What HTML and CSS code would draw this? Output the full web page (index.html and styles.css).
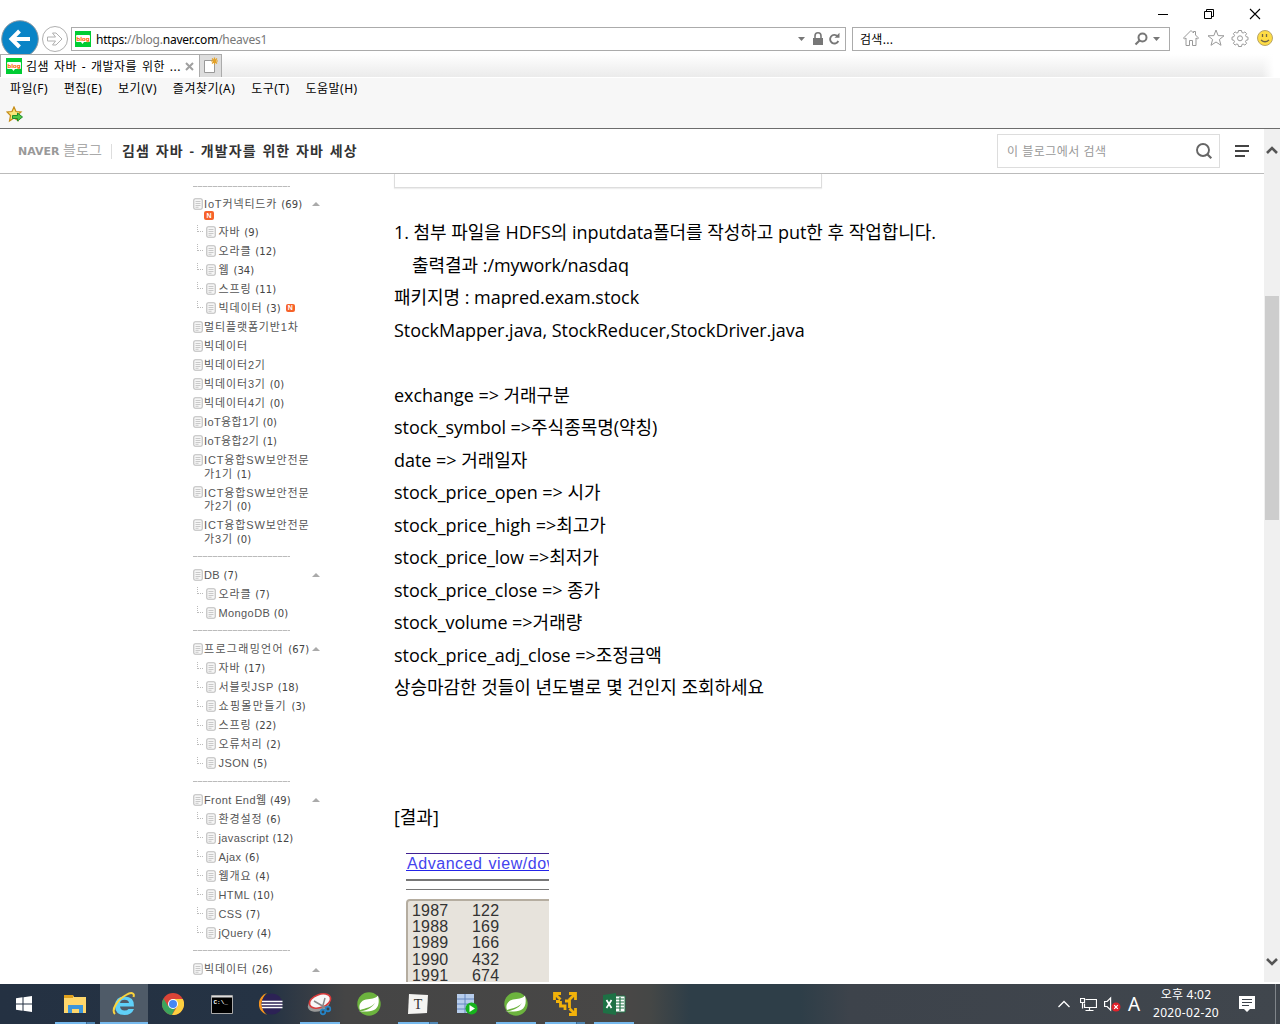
FILE: index.html
```html
<!DOCTYPE html>
<html lang="ko">
<head>
<meta charset="utf-8">
<title>김샘 자바 - 개발자를 위한 자바 세상</title>
<link rel="stylesheet" href="styles.css">
</head>
<body>
<svg class="defs" width="0" height="0" aria-hidden="true">
  <defs>
    <symbol id="doc" viewBox="0 0 10 12"><rect x=".75" y=".75" width="8.5" height="10.5" rx="1.5" fill="#f6f6f6" stroke="#bcbcbc" stroke-width="1.1"/><path d="M2.5 3.5h5M2.5 5.5h5M2.5 7.500h5M2.500 9.300h3" stroke="#c4c4c4" stroke-width=".9"/></symbol>
    <symbol id="spring" viewBox="0 0 24 24"><circle cx="12" cy="12" r="11.700" fill="#6cb33e"/><path d="M21 3.500c1.500 6 1 12-4 14.500-4 2-9 1.500-16 1.500 8-.5 14-3.500 17-8.500-4 4.500-9 5-15 7-2-5 1-9.500 6-10.500 5-1 9-.5 12-4z" fill="#fff"/></symbol>
    <symbol id="blog" viewBox="0 0 16 16"><path fill="#0c3" d="M0 0h16v16H0z"/><path fill="#fff" d="M2 4h12q1 0 1 1v5q0 1-1 1H9l-1.500 2L6 11H2q-1 0-1-1V5q0-1 1-1z"/><text x="8" y="9.500" text-anchor="middle" class="blog-word">blog</text></symbol>
  </defs>
</svg>

<header class="browser">
  <div class="titlebar">
    <svg width="12" height="12" viewBox="0 0 12 12"><path d="M1 6.500h10" stroke="#000"/></svg>
    <svg width="12" height="12" viewBox="0 0 12 12"><path d="M1.500 3.500h7v7h-7zM3.500 3.500v-2h7v7h-2" fill="none" stroke="#000"/></svg>
    <svg width="12" height="12" viewBox="0 0 12 12"><path d="M1 1l10 10M11 1L1 11" stroke="#000" stroke-width="1.100"/></svg>
  </div>
  <div class="navrow">
    <svg class="back" width="40" height="35" viewBox="0 0 40 35"><circle cx="20" cy="20" r="18.300" fill="#0a84c6" stroke="#8d9aa3"/><path d="M30 20H12M19.500 12l-8 8 8 8" fill="none" stroke="#fff" stroke-width="4"/></svg>
    <svg class="forward" width="28" height="28" viewBox="0 0 28 28"><circle cx="14" cy="14" r="12.500" fill="#fff" stroke="#b0b0b0"/><path d="M6.500 12h8l-3-4h3.500l6 6-6 6h-3.500l3-4h-8z" fill="none" stroke="#b0b0b0"/></svg>
    <div class="address">
      <svg width="16" height="16"><use href="#blog"/></svg>
      <span class="url">https:<i>//blog.</i>naver.com<i>/heaves1</i></span>
      <svg class="addr-tools" width="44" height="16" viewBox="0 0 44 16"><path d="M1 6h7L4.500 10z" fill="#777"/><path d="M16 7h10v7h-10z" fill="#777"/><path d="M18 7V5a3 3.200 0 0 1 6 0v2" fill="none" stroke="#777" stroke-width="1.600"/><path d="M40.500 5.200A4.300 4.300 0 1 0 41.300 10" fill="none" stroke="#777" stroke-width="1.900"/><path d="M37.500 6.800h5V1.800z" fill="#777"/></svg>
    </div>
    <div class="websearch">
      <span>검색...</span>
      <svg width="28" height="16" viewBox="0 0 28 16"><circle cx="8.500" cy="6.500" r="4" fill="none" stroke="#777" stroke-width="2"/><path d="M5.500 9.500L1.500 13.500" stroke="#777" stroke-width="2.200"/><path d="M19 6h7l-3.500 4z" fill="#777"/></svg>
    </div>
    <div class="tools">
      <svg width="18" height="18" viewBox="0 0 18 18"><path d="M1.500 9L9 1.500 11.500 4V2.500h2V6l3 3-1 1-1.500-1v7.500h-3.500v-5h-3v5H4V9l-1.500 1z" fill="#fff" stroke="#999"/></svg>
      <svg width="18" height="18" viewBox="0 0 18 18"><path d="M9 1l2.100 5.600 5.900.2-4.600 3.700 1.600 5.800L9 13l-5 3.300 1.600-5.800L1 6.800l5.900-.2z" fill="#fff" stroke="#999"/></svg>
      <svg width="18" height="18" viewBox="0 0 18 18"><path d="M7.500 1.500h3l.4 2 1.300.5 1.700-1.100 1.700 1.700-1.100 1.800.6 1.300 1.900.5v2.600l-1.900.5-.6 1.300 1.100 1.700-1.700 1.800-1.800-1.100-1.200.5-.4 2h-3l-.4-2-1.300-.5-1.700 1.100-1.700-1.800 1.100-1.700-.6-1.300-1.900-.5V8.200l1.900-.5.6-1.300-1.100-1.800L4.100 2.900 5.800 4l1.300-.5z" fill="#fff" stroke="#999"/><circle cx="9" cy="9.300" r="2.500" fill="#fff" stroke="#999"/></svg>
      <svg width="18" height="18" viewBox="0 0 18 18"><circle cx="9" cy="9" r="7.500" fill="#fedc45" stroke="#b8a56a"/><path d="M6.500 5v3M10.500 5v3M5 11q4 3.500 8 0" fill="none" stroke="#716546" stroke-width="1.300"/></svg>
    </div>
  </div>
  <div class="tabrow">
    <div class="tab"><svg width="16" height="16"><use href="#blog"/></svg><span>김샘 자바 - 개발자를 위한 ...</span><svg width="9" height="9" viewBox="0 0 9 9"><path d="M1 1l7 7M8 1L1 8" stroke="#a0a0a0" stroke-width="2"/></svg></div>
    <div class="newtab"><svg width="16" height="17" viewBox="0 0 16 17"><path d="M.5 3.500h10v12H.5z" fill="#fff" stroke="#999"/><path d="M10.500.5v7M7 4h7M8 1.500l5 5M13 1.500l-5 5" stroke="#e3a127" stroke-width="1.200"/></svg></div>
  </div>
  <nav class="menus"><span>파일(F)</span><span>편집(E)</span><span>보기(V)</span><span>즐겨찾기(A)</span><span>도구(T)</span><span>도움말(H)</span></nav>
  <div class="favorites"><svg width="17" height="17" viewBox="0 0 17 17"><path d="M8 1l2 4.500 5 .5-4 3.500 1 5L8 12l-4.500 3 1-5.500L1 6l5-.5z" fill="#fbe57b" stroke="#c58b16" stroke-width="1.200"/><path d="M6.500 9.500h5V7l5 4-5 4v-2.500h-5z" fill="#51c544" stroke="#1f8e2c"/></svg></div>
</header>

<div class="viewport">
  <div class="page">
    <header class="bloghead">
      <span class="logo"><b>NAVER</b> 블로그</span>
      <h1>김샘 자바 - 개발자를 위한 자바 세상</h1>
      <div class="blogsearch"><span>이 블로그에서 검색</span><svg width="18" height="18" viewBox="0 0 18 18"><circle cx="8" cy="8" r="6" fill="none" stroke="#666" stroke-width="1.900"/><path d="M12.300 12.300l4 4" stroke="#666" stroke-width="2.200"/></svg></div>
      <svg class="burger" width="14" height="12" viewBox="0 0 14 12"><path d="M0 1h14M0 6h14M0 11h10" stroke="#444" stroke-width="2"/></svg>
    </header>
    <div class="columns">
      <aside class="side">
        <hr>
        <ul>
          <li class="top has-new"><svg><use href="#doc"/></svg><span>IoT커넥티드카 <em>(69)</em><br><b class="new">N</b></span><i class="fold"></i></li>
          <li class="sub"><svg><use href="#doc"/></svg><span>자바 <em>(9)</em></span></li>
          <li class="sub"><svg><use href="#doc"/></svg><span>오라클 <em>(12)</em></span></li>
          <li class="sub"><svg><use href="#doc"/></svg><span>웹 <em>(34)</em></span></li>
          <li class="sub"><svg><use href="#doc"/></svg><span>스프링 <em>(11)</em></span></li>
          <li class="sub"><svg><use href="#doc"/></svg><span>빅데이터 <em>(3)</em></span><b class="new small">N</b></li>
          <li><svg><use href="#doc"/></svg><span>멀티플랫폼기반1차</span></li>
          <li><svg><use href="#doc"/></svg><span>빅데이터</span></li>
          <li><svg><use href="#doc"/></svg><span>빅데이터2기</span></li>
          <li><svg><use href="#doc"/></svg><span>빅데이터3기 <em>(0)</em></span></li>
          <li><svg><use href="#doc"/></svg><span>빅데이터4기 <em>(0)</em></span></li>
          <li class="latin"><svg><use href="#doc"/></svg><span>IoT융합1기 <em>(0)</em></span></li>
          <li class="latin"><svg><use href="#doc"/></svg><span>IoT융합2기 <em>(1)</em></span></li>
          <li class="two"><svg><use href="#doc"/></svg><span>ICT융합SW보안전문<br>가1기 <em>(1)</em></span></li>
          <li class="two"><svg><use href="#doc"/></svg><span>ICT융합SW보안전문<br>가2기 <em>(0)</em></span></li>
          <li class="two"><svg><use href="#doc"/></svg><span>ICT융합SW보안전문<br>가3기 <em>(0)</em></span></li>
        </ul>
        <hr>
        <ul>
          <li class="top latin"><svg><use href="#doc"/></svg><span>DB <em>(7)</em></span><i class="fold"></i></li>
          <li class="sub"><svg><use href="#doc"/></svg><span>오라클 <em>(7)</em></span></li>
          <li class="sub latin"><svg><use href="#doc"/></svg><span>MongoDB <em>(0)</em></span></li>
        </ul>
        <hr>
        <ul>
          <li class="top wide"><svg><use href="#doc"/></svg><span>프로그래밍언어 <em>(67)</em></span><i class="fold"></i></li>
          <li class="sub"><svg><use href="#doc"/></svg><span>자바 <em>(17)</em></span></li>
          <li class="sub"><svg><use href="#doc"/></svg><span>서블릿JSP <em>(18)</em></span></li>
          <li class="sub wide"><svg><use href="#doc"/></svg><span>쇼핑몰만들기 <em>(3)</em></span></li>
          <li class="sub"><svg><use href="#doc"/></svg><span>스프링 <em>(22)</em></span></li>
          <li class="sub"><svg><use href="#doc"/></svg><span>오류처리 <em>(2)</em></span></li>
          <li class="sub latin"><svg><use href="#doc"/></svg><span>JSON <em>(5)</em></span></li>
        </ul>
        <hr>
        <ul>
          <li class="top latin"><svg><use href="#doc"/></svg><span>Front End웹 <em>(49)</em></span><i class="fold"></i></li>
          <li class="sub"><svg><use href="#doc"/></svg><span>환경설정 <em>(6)</em></span></li>
          <li class="sub latin"><svg><use href="#doc"/></svg><span>javascript <em>(12)</em></span></li>
          <li class="sub latin"><svg><use href="#doc"/></svg><span>Ajax <em>(6)</em></span></li>
          <li class="sub"><svg><use href="#doc"/></svg><span>웹개요 <em>(4)</em></span></li>
          <li class="sub latin"><svg><use href="#doc"/></svg><span>HTML <em>(10)</em></span></li>
          <li class="sub latin"><svg><use href="#doc"/></svg><span>CSS <em>(7)</em></span></li>
          <li class="sub latin"><svg><use href="#doc"/></svg><span>jQuery <em>(4)</em></span></li>
        </ul>
        <hr>
        <ul>
          <li class="top"><svg><use href="#doc"/></svg><span>빅데이터 <em>(26)</em></span><i class="fold"></i></li>
        </ul>
      </aside>
      <main class="post">
        <div class="card"></div>
        <div class="text">
          <p>1. 첨부 파일을 HDFS의 inputdata폴더를 작성하고 put한 후 작업합니다.</p>
          <p class="indent">출력결과 :/mywork/nasdaq</p>
          <p>패키지명 : mapred.exam.stock</p>
          <p>StockMapper.java, StockReducer,StockDriver.java</p>
          <p></p>
          <p>exchange =&gt; 거래구분</p>
          <p>stock_symbol =&gt;주식종목명(약칭)</p>
          <p>date =&gt; 거래일자</p>
          <p>stock_price_open =&gt; 시가</p>
          <p>stock_price_high =&gt;최고가</p>
          <p>stock_price_low =&gt;최저가</p>
          <p>stock_price_close =&gt; 종가</p>
          <p>stock_volume =&gt;거래량</p>
          <p>stock_price_adj_close =&gt;조정금액</p>
          <p>상승마감한 것들이 년도별로 몇 건인지 조회하세요</p>
          <p></p><p></p><p></p>
          <p>[결과]</p>
        </div>
        <figure class="result">
          <div class="adv">Advanced view/dow</div>
          <div class="rules"></div>
          <div class="output">
            <div><span>1987</span><span>122</span></div>
            <div><span>1988</span><span>169</span></div>
            <div><span>1989</span><span>166</span></div>
            <div><span>1990</span><span>432</span></div>
            <div><span>1991</span><span>674</span></div>
          </div>
        </figure>
      </main>
    </div>
  </div>
  <div class="scroll">
    <svg width="12" height="8" viewBox="0 0 12 8"><path d="M1 7l5-5 5 5" fill="none" stroke="#555" stroke-width="2.600"/></svg>
    <div class="thumb"></div>
    <svg width="12" height="8" viewBox="0 0 12 8"><path d="M1 1l5 5 5-5" fill="none" stroke="#555" stroke-width="2.600"/></svg>
  </div>
</div>

<footer class="taskbar">
  <div class="start"><svg width="16" height="16" viewBox="0 0 16 16"><path d="M0 2.200l6.500-.9v6.200H0zM7.500 1.200L16 0v7.500H7.500zM0 8.500h6.500v6.200L0 13.800zM7.500 8.500H16V16l-8.500-1.200z" fill="#fff"/></svg></div>
  <div class="apps">
    <div class="app run multi"><svg width="24" height="24" viewBox="0 0 24 24"><path d="M1 3h9l1 2h12v16H1z" fill="#ffd76b"/><path d="M1 3h9v3H1z" fill="#e0a01c"/><path d="M5 13h15v8h-4v-4H9v4H5z" fill="#3c96dc"/></svg></div>
    <div class="app run active"><svg width="24" height="24" viewBox="0 0 24 24"><path d="M19.500 14.500H8q.5 4 4.500 4 3 0 4-1.500h5.500q-2.500 6-9.500 6-9.500 0-9.500-9.500Q3.500 4.500 12.500 4.500q10 0 9.500 10zM8 11h9q-.5-3.200-4.500-3.200T8 11z" fill="#5fd0f8"/><path d="M3 22C-1 18 5 8 14 3c5-3 9-2.500 7.500 2" fill="none" stroke="#fbd33c" stroke-width="2"/></svg></div>
    <div class="app"><svg width="22" height="22" viewBox="0 0 22 22"><circle cx="11" cy="11" r="11" fill="#db4437"/><path d="M1.500 5.500A11 11 0 0 0 10 22l4-8-8-1z" fill="#3ba55c"/><path d="M11 6h9.800A11 11 0 0 1 10 22l5.500-9z" fill="#fccf3f"/><circle cx="11" cy="11" r="5" fill="#fff"/><circle cx="11" cy="11" r="4" fill="#4587f3"/></svg></div>
    <div class="app"><svg width="22" height="19" viewBox="0 0 22 19"><path d="M.5.500h21v18H.5z" fill="#000" stroke="#aaa"/><path d="M1 1h20v1.500H1z" fill="#ddd"/><text x="2.500" y="8.500" class="cmd-word">C:\_</text></svg></div>
    <div class="app"><svg width="24" height="22" viewBox="0 0 24 22"><path d="M8 0a11.500 11.500 0 0 0 0 22A14 14 0 0 1 8 0z" fill="#f7941e"/><circle cx="13" cy="11" r="10.500" fill="#2c2255"/><path d="M3 8.500h20.500M2.500 11.500h21M3 14.500h20.500" stroke="#fff" stroke-width="1.500"/></svg></div>
    <div class="app run"><svg width="26" height="24" viewBox="0 0 26 24"><ellipse cx="11.500" cy="12" rx="11.500" ry="7" fill="#999" transform="rotate(-20 12 11)"/><ellipse cx="13" cy="9" rx="11" ry="6.500" fill="#f7f7f7" stroke="#d83b3b" stroke-width="1.600" transform="rotate(-20 13 9)"/><path d="M7 9l12 7M18 6l-3 11" stroke="#888" stroke-width="1.500"/><circle cx="21" cy="17" r="2.300" fill="none" stroke="#2583c6" stroke-width="1.700"/><circle cx="16" cy="20" r="2.300" fill="none" stroke="#2583c6" stroke-width="1.700"/></svg></div>
    <div class="app"><svg width="24" height="24"><use href="#spring"/></svg></div>
    <div class="app run multi"><svg width="22" height="22" viewBox="0 0 22 22"><path d="M2 1l19 1-1 18-8 .500L1 21z" fill="#f4f4f2"/><text x="11" y="16" text-anchor="middle" class="t-word">T</text></svg></div>
    <div class="app"><svg width="22" height="22" viewBox="0 0 22 22"><path d="M1 1h17v19H1z" fill="#b7cdec"/><path d="M1 6h17M1 11h17M1 16h17M9 1v19" stroke="#6486be"/><circle cx="15.500" cy="15.500" r="6" fill="#16b31c"/><path d="M13.500 12l5.500 3.500-5.500 3.500z" fill="#fff"/></svg></div>
    <div class="app run"><svg width="24" height="24"><use href="#spring"/></svg></div>
    <div class="app run multi"><svg width="24" height="24" viewBox="0 0 24 24"><path d="M1.500 8V1.500H8M2 2l5.500 5.500M16 1.500h6.500V8M22 2l-6 6M22.500 16v6.500H16M22 22l-5.500-5.500M7 9.500H3M7.500 9v5H12v4M12 9h4.500v7" fill="none" stroke="#f2b20a" stroke-width="2.800"/></svg></div>
    <div class="app run"><svg width="23" height="22" viewBox="0 0 23 22"><path d="M11 3h11v16H11z" fill="#fff" stroke="#217346"/><path d="M13 6h8M13 9h8M13 12h8M13 15h8M17 4v14" stroke="#217346" stroke-width="1.200"/><path d="M0 2l13-2v22L0 20z" fill="#1e7145"/><path d="M3.500 7l5 8M8.500 7l-5 8" stroke="#fff" stroke-width="1.700"/></svg></div>
  </div>
  <div class="tray">
    <svg width="12" height="8" viewBox="0 0 12 8"><path d="M.5 7L6 1.500 11.500 7" fill="none" stroke="#fff" stroke-width="1.300"/></svg>
    <svg width="17" height="15" viewBox="0 0 17 15"><path d="M5.500 2.500h11v8h-12v-4M9.500 10.500v3M5.500 13.500h8M.5 1.500h4v4h-4zM2.500 5.500v6" fill="none" stroke="#fff" stroke-width="1.200"/></svg>
    <svg width="17" height="16" viewBox="0 0 17 16"><path d="M.6 5.500h2.500l3.500-3.500v12l-3.500-3.500H.6z" fill="none" stroke="#fff" stroke-width="1.200"/><circle cx="12" cy="11" r="4.500" fill="#e1222b"/><path d="M10.200 9.200l3.600 3.600M13.800 9.200l-3.600 3.600" stroke="#fff" stroke-width="1.200"/></svg>
    <span class="ime">A</span>
    <div class="clock"><span>오후 4:02</span><span class="date">2020-02-20</span></div>
    <svg width="16" height="16" viewBox="0 0 16 16"><path d="M0 0h16v13h-5l-3 3-3-3H0z" fill="#fff"/><path d="M3 3.500h10M3 6.500h10M3 9.500h7" stroke="#3d434b" stroke-width="1.100"/></svg>
    <div class="peek"></div>
  </div>
</footer>
</body>
</html>
```
FILE: styles.css
```css
* { box-sizing: border-box; }
body { margin: 0; width: 1280px; height: 1024px; overflow: hidden; display: flex; flex-direction: column; background: #fff; font: 12px "Noto Sans", "Noto Sans CJK KR", sans-serif; color: #000; }
svg { display: block; flex: none; }
span, p { white-space: nowrap; }
.defs { position: absolute; }
.blog-word { font: bold 5.5px "DejaVu Sans", sans-serif; fill: #f60; }
.cmd-word { font: bold 6px "Liberation Mono", monospace; fill: #fff; }
.t-word { font: 14px "Liberation Serif", serif; fill: #333; }

.browser { height: 129px; flex: none; background: #f7f7f7; border-bottom: 1px solid #6d6d6d; }
.titlebar { height: 20px; padding: 8px 19px 0 0; display: flex; justify-content: flex-end; gap: 34px; background: #fff; }
.navrow { height: 34px; display: flex; align-items: flex-start; background: #fff; padding-top: 7px; }
.back { margin-top: -8px; }
.forward { margin: -2px 2px 0 1px; }
.address, .websearch { height: 24px; border: 1px solid #ababab; background: #fff; display: flex; align-items: center; justify-content: space-between; }
.address { width: 775px; padding: 0 4px 0 3px; }
.url { flex: 1; margin-left: 5px; letter-spacing: -.23px; }
.url i { font-style: normal; color: #777; }
.websearch { width: 318px; margin-left: 6px; padding: 0 7px; }
.websearch span { letter-spacing: .3px; }
.tools { display: flex; gap: 6.5px; margin: 2px 0 0 12px; }
.tabrow { height: 24px; display: flex; background: linear-gradient(90deg, transparent 1262px, #fff 1274px), linear-gradient(#fff, #ebebeb); border-bottom: 1px solid #fff; }
.tab { width: 200px; height: 23px; border: 1px solid #ababab; border-bottom: 0; background: #fff; display: flex; align-items: center; padding: 0 5px; }
.tab span { flex: 1; margin-left: 4px; letter-spacing: .5px; word-spacing: 1.2px; }
.newtab { width: 23px; height: 23px; margin-left: -1px; border: 1px solid #ababab; border-bottom: 0; background: #ddd; padding: 2px 0 0 4px; }
.menus { display: flex; gap: 15.8px; height: 20px; align-items: center; padding-left: 10px; letter-spacing: .5px; }
.favorites { padding: 8px 0 0 6px; }

.viewport { height: 855px; flex: none; display: flex; }
.page { width: 1264px; height: 853px; overflow: hidden; display: flex; flex-direction: column; }
.bloghead { height: 45px; flex: none; border-bottom: 1px solid #bbb; display: flex; align-items: center; padding-left: 18px; }
.logo { width: 94px; height: 15px; border-right: 1px solid #ddd; line-height: 12px; font-size: 14px; color: #aaa; }
.logo b { font: 900 11px "DejaVu Sans", sans-serif; letter-spacing: 0; color: #999; }
.bloghead h1 { margin: 0 auto 0 10px; font-size: 14px; letter-spacing: 1.1px; word-spacing: 1px; color: #333; line-height: 20px; font-weight: 600; }
.blogsearch { width: 223px; height: 34px; border: 1px solid #ddd; display: flex; align-items: center; justify-content: space-between; padding: 0 6px 0 9px; color: #999; letter-spacing: .5px; }
.burger { margin: 0 15px; }
.columns { flex: 1; min-height: 0; display: flex; align-items: flex-start; }

.side { width: 394px; padding: 12px 0 0 193px; font: 11px/13.500px "Liberation Sans", "Noto Sans CJK KR", sans-serif; letter-spacing: .85px; color: #555; }
.side hr { border: 0; width: 97px; height: 1px; margin: 8px 0 8.300px; background: repeating-linear-gradient(90deg, #bbb 0 4px, #ddd 4px 5px); }
.side hr:first-child { margin: 0 0 7px; }
.side ul { list-style: none; margin: 0; padding: 0; }
.side li { height: 19.050px; padding-top: 3px; display: flex; width: 127px; }
.side li svg { width: 10px; height: 12px; margin: .5px 1px 0 0; }
.side li span { padding-top: .7px; }
.side .has-new { height: 28px; }
.side .two { height: 32.400px; }
.side .latin { letter-spacing: .4px; }
.side .wide { letter-spacing: 1.3px; }
.side .sub { padding-left: 4px; }
.side .sub::before { content: ""; width: 5px; height: 6px; margin-right: 3px; border: dotted #bbb; border-width: 0 0 1px 1px; }
.side .sub svg { margin-right: 2.500px; }
.side em { font: 10px/13px "DejaVu Sans", sans-serif; letter-spacing: .1px; color: #444; }
.fold { margin: 5px 0 0 auto; width: 0; height: 0; border: 4px solid transparent; border-top: 0; border-bottom-color: #aaa; }
.new { display: block; width: 10px; height: 9px; border-radius: 2px; background: #f6622a; color: #fff; font: bold 7px/9px "Liberation Sans", sans-serif; letter-spacing: 0; text-align: center; }
.new.small { height: 8px; width: 9px; line-height: 8px; margin: 3px 0 0 5px; }

.post { width: 700px; }
.card { width: 428px; height: 14px; border: 1px solid #ddd; border-top: 0; box-shadow: 0 1px 1px #eee; }
.text { padding-top: 28px; font: 18px/32.500px "Open Sans", "Noto Sans CJK KR", sans-serif; letter-spacing: -.04px; }
.text p { margin: 0; height: 32.500px; }
.text .indent { padding-left: 18px; }
.result { margin: 19.500px 0 0 12px; width: 143px; overflow: hidden; font: 16px/16px "Liberation Sans", sans-serif; }
.adv { height: 18px; border-top: 1px solid #402090; border-bottom: 1px solid #2525e8; color: #44e; white-space: nowrap; letter-spacing: .55px; word-spacing: 1px; line-height: 20px; padding-left: 1px; }
.rules { height: 11px; margin-top: 8px; border: solid #777; border-width: 2px 0 1px; }
.output { margin-top: 9px; width: 160px; height: 100px; padding: 2px 0 0 4px; background: #e7e3dc; border: 2px solid #b5ada0; border-radius: 4px; color: #333; }
.output div { display: flex; height: 16.200px; }
.output span { width: 60px; letter-spacing: .2px; }

.scroll { width: 16px; height: 853px; background: #f0f0f0; padding: 17px 0 16px; display: flex; flex-direction: column; align-items: center; }
.thumb { width: 14px; height: 224px; margin: 142px 0 auto; background: #cdcdcd; }

.taskbar { height: 40px; flex: none; display: flex; background: linear-gradient(90deg, #243142 0, #253344 270px, #454545 345px, #484746 630px, #454746 650px, #2e3e48 690px, #2e3e48 800px, #3d434b 850px, #40464d 1280px); color: #fff; }
.start { width: 51px; padding: 12px 16px; }
.apps { display: flex; gap: 1px; }
.app { width: 48px; height: 40px; display: flex; align-items: center; justify-content: center; background: no-repeat 4px 100% / 40px 2px; }
.run { background-image: linear-gradient(#76b9ed, #76b9ed); }
.multi { background-image: linear-gradient(90deg, #76b9ed 31px, #3c6890 31px 32px, #5087b5 32px); }
.active { background-color: #4f5b68; background-position: 0 100%; background-size: 48px 2px; }
.tray { margin-left: auto; display: flex; align-items: center; }
.tray svg:nth-child(2) { margin-left: 10px; }
.tray svg:nth-child(3) { margin-left: 7px; }
.ime { width: 12px; margin: 0 12px 0 7px; font-size: 19px; }
.clock { width: 68px; display: flex; flex-direction: column; text-align: center; line-height: 18px; letter-spacing: .2px; }
.date { letter-spacing: .35px; }
.clock + svg { margin: 0 20px 0 19px; }
.peek { width: 5px; height: 40px; border-left: 1px solid #80858a; }
```
